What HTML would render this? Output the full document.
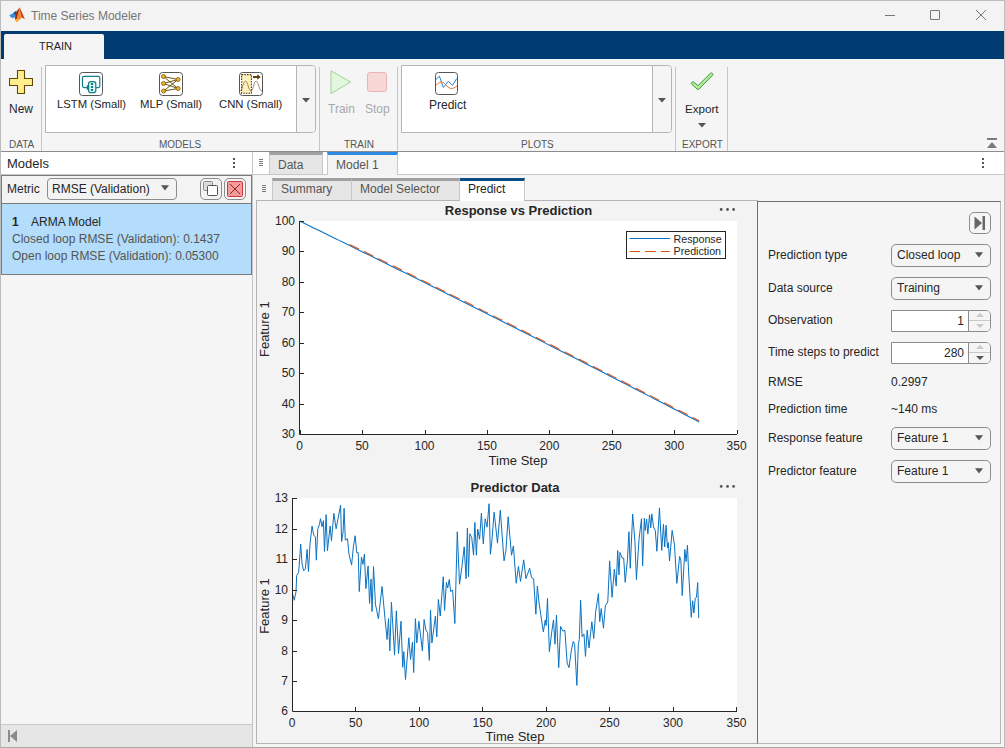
<!DOCTYPE html>
<html><head><meta charset="utf-8">
<style>
*{box-sizing:border-box;margin:0;padding:0}
html,body{width:1005px;height:748px;overflow:hidden;background:#f3f3f3;font-family:"Liberation Sans",sans-serif;color:#262626}
.a{position:absolute}
.t{position:absolute;white-space:nowrap;line-height:1}
</style></head><body>

<!-- title bar -->
<div class="a" style="left:1px;top:1px;width:1003px;height:30px;background:#f3f3f3"></div>
<div class="t" style="left:31px;top:10px;font-size:12px;color:#767676">Time Series Modeler</div>
<div class="a" style="left:885px;top:15px;width:10px;height:1px;background:#767676"></div>
<div class="a" style="left:930px;top:10px;width:10px;height:10px;border:1px solid #767676;border-radius:1px"></div>
<svg class="a" style="left:975px;top:9px" width="12" height="12" viewBox="0 0 12 12"><path d="M1 1L11 11M11 1L1 11" stroke="#767676" stroke-width="1"/></svg>

<!-- toolstrip tab bar -->
<div class="a" style="left:1px;top:31px;width:1003px;height:28px;background:#003c71"></div>
<div class="a" style="left:4px;top:34px;width:100px;height:25px;background:#f5f5f5;border-radius:2px 2px 0 0"></div>
<div class="t" style="left:39px;top:41px;font-size:11px;color:#262626">TRAIN</div>

<!-- toolstrip body -->
<div class="a" style="left:1px;top:59px;width:1003px;height:92px;background:#f5f5f5"></div>
<div class="a" style="left:1px;top:151px;width:1003px;height:1px;background:#8c8c8c"></div>

<!-- DATA section -->
<svg class="a" style="left:9px;top:70px" width="24" height="24" viewBox="0 0 24 24"><path d="M8.5 0.5h7v8h8v7h-8v8h-7v-8h-8v-7h8z" fill="#ffee8e" stroke="#614600" stroke-width="1.1" stroke-linejoin="round"/></svg>
<div class="t" style="left:9px;top:103px;font-size:12px;color:#262626">New</div>
<div class="t" style="left:9px;top:140px;font-size:10px;color:#555">DATA</div>
<div class="a" style="left:41px;top:67px;width:1px;height:84px;background:#c6c6c6"></div>

<!-- MODELS gallery -->
<div class="a" style="left:45px;top:65px;width:271px;height:68px;background:#fff;border:1px solid #b4b4b4;border-radius:0 4px 4px 0"></div>
<div class="a" style="left:296px;top:66px;width:19px;height:66px;background:#f5f5f5;border-left:1px solid #b4b4b4;border-radius:0 3px 3px 0"></div>
<svg class="a" style="left:302px;top:98px" width="8" height="4.5" viewBox="0 0 8 4.5"><path d="M0 0h8L4 4.5z" fill="#555"/></svg>
<!-- LSTM icon -->
<svg class="a" style="left:79px;top:72px" width="24" height="24" viewBox="0 0 24 24">
<rect x="0.5" y="0.5" width="23" height="23" rx="3" fill="#fff" stroke="#555" stroke-width="1"/>
<path d="M16.5 15.6H19.3a1.5 1.5 0 0 0 1.5-1.5V5.8a1.5 1.5 0 0 0-1.5-1.5H5a1.5 1.5 0 0 0-1.5 1.5V14.1a1.5 1.5 0 0 0 1.5 1.5H8" stroke="#117f87" stroke-width="1.2" fill="none"/>
<path d="M7.8 12.6L11.2 15.6 7.8 18.6z" fill="#117f87"/>
<rect x="9.6" y="9.6" width="7.2" height="11" rx="2.2" fill="#dff6f6" stroke="#117f87" stroke-width="1.2"/>
<rect x="11.9" y="11" width="2.2" height="2" fill="#117f87"/><rect x="11.9" y="14" width="2.2" height="2" fill="#117f87"/><rect x="11.9" y="17" width="2.2" height="2" fill="#117f87"/>
</svg>
<div class="t" style="left:57px;top:99px;font-size:11.3px;color:#262626">LSTM (Small)</div>
<!-- MLP icon -->
<svg class="a" style="left:159px;top:72px" width="24" height="24" viewBox="0 0 24 24">
<rect x="0.5" y="0.5" width="23" height="23" rx="3" fill="#fff" stroke="#555" stroke-width="1"/>
<path d="M4.5 4.5L19 7.5M4.5 4.5L19 16.5M4.5 11.5L19 7.5M4.5 11.5L19 16.5M4.5 19L19 7.5M4.5 19L19 16.5" stroke="#5c4200" stroke-width="0.9" fill="none"/>
<circle cx="4.5" cy="4.5" r="2" fill="#f2b526" stroke="#7a5800" stroke-width="0.8"/>
<circle cx="4.5" cy="11.5" r="2" fill="#f2b526" stroke="#7a5800" stroke-width="0.8"/>
<circle cx="4.5" cy="19" r="2" fill="#f2b526" stroke="#7a5800" stroke-width="0.8"/>
<circle cx="19" cy="7.5" r="2" fill="#f2b526" stroke="#7a5800" stroke-width="0.8"/>
<circle cx="19" cy="16.5" r="2" fill="#f2b526" stroke="#7a5800" stroke-width="0.8"/>
</svg>
<div class="t" style="left:140px;top:99px;font-size:11.3px;color:#262626">MLP (Small)</div>
<!-- CNN icon -->
<svg class="a" style="left:239px;top:72px" width="24" height="24" viewBox="0 0 24 24">
<rect x="0.5" y="0.5" width="23" height="23" rx="3" fill="#fff" stroke="#555" stroke-width="1"/>
<rect x="2.6" y="2.6" width="9.8" height="18.6" fill="#fdf1bd" stroke="#5a3c00" stroke-width="1.1" stroke-dasharray="1.6 1.1"/>
<path d="M1 19C3.5 19 4 9.2 6.5 9.2S9.5 19 12 19 14.5 9.2 17 9.2 20 19 23 19" fill="none" stroke="#8a7048" stroke-width="0.8"/>
<path d="M14 5h5.2" stroke="#5a3c00" stroke-width="1.9"/><path d="M18.3 2.2l3.4 2.8-3.4 2.8z" fill="#5a3c00"/>
</svg>
<div class="t" style="left:219px;top:99px;font-size:11.3px;color:#262626">CNN (Small)</div>
<div class="t" style="left:159px;top:140px;font-size:10px;color:#555">MODELS</div>
<div class="a" style="left:319px;top:67px;width:1px;height:84px;background:#c6c6c6"></div>

<!-- TRAIN section -->
<svg class="a" style="left:330px;top:70px" width="22" height="25" viewBox="0 0 22 25"><path d="M1 0.8L20.5 12 1 23.5z" fill="#e3f7de" stroke="#9ed394" stroke-width="1" stroke-linejoin="round"/></svg>
<div class="a" style="left:367px;top:72px;width:20px;height:20px;background:#f8d7d7;border:1px solid #e8b4b4;border-radius:3px"></div>
<div class="t" style="left:328px;top:103px;font-size:12px;color:#a8a8a8">Train</div>
<div class="t" style="left:365px;top:103px;font-size:12px;color:#a8a8a8">Stop</div>
<div class="t" style="left:344px;top:140px;font-size:10px;color:#555">TRAIN</div>
<div class="a" style="left:397px;top:67px;width:1px;height:84px;background:#c6c6c6"></div>

<!-- PLOTS gallery -->
<div class="a" style="left:401px;top:65px;width:271px;height:68px;background:#fff;border:1px solid #b4b4b4;border-radius:0 4px 4px 0"></div>
<div class="a" style="left:652px;top:66px;width:19px;height:66px;background:#f5f5f5;border-left:1px solid #b4b4b4;border-radius:0 3px 3px 0"></div>
<svg class="a" style="left:658px;top:98px" width="8" height="4.5" viewBox="0 0 8 4.5"><path d="M0 0h8L4 4.5z" fill="#555"/></svg>
<svg class="a" style="left:435px;top:72px" width="23" height="23" viewBox="0 0 23 23">
<rect x="0.5" y="0.5" width="22" height="22" rx="3" fill="#fff" stroke="#555" stroke-width="1"/>
<path d="M1 7.4L4.4 4.2 8.4 15.5 13.4 9.2 17.5 13.4 21.8 6.4" fill="none" stroke="#2a86d2" stroke-width="1"/>
<path d="M1 13.3C3.5 10.5 5.5 9.8 7.5 10.2C10 10.8 12 15.5 15.5 16.4C18 16.9 20 15.5 22 14" fill="none" stroke="#e66f36" stroke-width="1"/>
</svg>
<div class="t" style="left:429px;top:99px;font-size:12px;color:#262626">Predict</div>
<div class="t" style="left:521px;top:140px;font-size:10px;color:#555">PLOTS</div>
<div class="a" style="left:675px;top:67px;width:1px;height:84px;background:#c6c6c6"></div>

<!-- EXPORT -->
<svg class="a" style="left:690px;top:72px" width="24" height="19" viewBox="0 0 24 19"><path d="M1.8 10.3a1.4 1.4 0 0 1 2-0.1L8 13.6 20.4 1.4a1.4 1.4 0 0 1 2 2L9 17a1.4 1.4 0 0 1-2 0L1.9 12.3a1.4 1.4 0 0 1-0.1-2z" fill="#b2ec9c" stroke="#3d9e3a" stroke-width="1"/></svg>
<div class="t" style="left:685px;top:103px;font-size:11.6px;color:#262626">Export</div>
<svg class="a" style="left:698px;top:123px" width="8" height="4.5" viewBox="0 0 8 4.5"><path d="M0 0h8L4 4.5z" fill="#555"/></svg>
<div class="t" style="left:682px;top:140px;font-size:10px;color:#555">EXPORT</div>
<div class="a" style="left:727px;top:67px;width:1px;height:84px;background:#c6c6c6"></div>
<!-- collapse toolstrip -->
<div class="a" style="left:987px;top:138px;width:10px;height:2px;background:#7a7a7a"></div>
<svg class="a" style="left:987px;top:142px" width="10" height="6" viewBox="0 0 10 6"><path d="M0 6L5 0 10 6z" fill="#7a7a7a"/></svg>


<!-- MATLAB logo -->
<svg class="a" style="left:0;top:0" width="30" height="26" viewBox="0 0 30 26">
<path d="M9.3 15.2L13 13.3 15.5 11.2 17 12.5 15.5 16.5 13.5 18.3 11 17.6z" fill="#3d8fd8"/>
<path d="M13.5 13L16.2 10.8 17.5 12.8 15.2 15.8z" fill="#1f4f9a"/>
<path d="M19.6 7.6L21.5 11.5 24.8 19.2 22 17.5 16.6 22.2 14.8 19.5 15.5 14.5 17.5 10.5z" fill="#ee8a34"/>
<path d="M19.6 7.6L21.5 11.5 24.8 19.2 21.6 17z" fill="#c8401e"/>
<path d="M17.5 10.5L19.6 7.6 18 13 16.5 19 15 19.5 15.5 14.5z" fill="#9a2616"/>
<path d="M15 19.5L16.6 22.2 19 19.5 16.5 19z" fill="#f7b32b"/>
</svg>

<!-- MODELS PANEL -->
<div class="a" style="left:1px;top:152px;width:251px;height:22px;background:#fff"></div>
<div class="t" style="left:7px;top:157px;font-size:13px;color:#262626">Models</div>
<div class="a" style="left:233px;top:158px;width:2px;height:2px;background:#555"></div>
<div class="a" style="left:233px;top:162px;width:2px;height:2px;background:#555"></div>
<div class="a" style="left:233px;top:166px;width:2px;height:2px;background:#555"></div>
<div class="a" style="left:1px;top:174px;width:251px;height:1px;background:#c8c8c8"></div>
<!-- metric row -->
<div class="a" style="left:1px;top:175px;width:251px;height:100px;background:#b3ddfb;border:1px solid #7a7a7a"></div>
<div class="a" style="left:2px;top:176px;width:249px;height:28px;background:#f3f3f3;border-bottom:1px solid #7a7a7a"></div>
<div class="t" style="left:7px;top:183px;font-size:12px;color:#262626">Metric</div>
<div class="a" style="left:47px;top:178px;width:130px;height:22px;background:#f3f3f3;border:1px solid #8c8c8c;border-radius:4px"></div>
<div class="t" style="left:52px;top:183px;font-size:12px;color:#262626">RMSE (Validation)</div>
<svg class="a" style="left:161px;top:185px" width="8" height="6" viewBox="0 0 8 6"><path d="M0 0.3h8L4 5.6z" fill="#555"/></svg>
<div class="a" style="left:200px;top:178px;width:22px;height:22px;border:1px solid #8c8c8c;border-radius:5px"></div>
<svg class="a" style="left:203px;top:181px" width="16" height="16" viewBox="0 0 16 16"><rect x="0.5" y="0.5" width="9" height="9" rx="1" fill="#dcdcdc" stroke="#8c8c8c"/><rect x="4.5" y="4.5" width="10" height="10" rx="1" fill="#fff" stroke="#555"/></svg>
<div class="a" style="left:224px;top:178px;width:22px;height:22px;border:1px solid #8c8c8c;border-radius:5px"></div>
<svg class="a" style="left:227px;top:181px" width="16" height="16" viewBox="0 0 16 16"><rect x="0.5" y="0.5" width="15" height="15" rx="1" fill="#f59a9a" stroke="#c43c3c"/><path d="M3 3L13 13M13 3L3 13" stroke="#7a1a1a" stroke-width="0.9"/></svg>
<!-- selected model -->
<div class="t" style="left:12px;top:216px;font-size:12px;font-weight:bold;color:#262626">1</div>
<div class="t" style="left:31px;top:216px;font-size:12px;color:#262626">ARMA Model</div>
<div class="t" style="left:12px;top:233px;font-size:12px;color:#555">Closed loop RMSE (Validation): 0.1437</div>
<div class="t" style="left:12px;top:250px;font-size:12px;color:#555">Open loop RMSE (Validation): 0.05300</div>
<!-- list bg -->
<div class="a" style="left:1px;top:275px;width:251px;height:449px;background:#f5f5f5"></div>
<div class="a" style="left:1px;top:724px;width:251px;height:23px;background:#e6e6e6;border-top:1px solid #c8c8c8"></div>
<div class="a" style="left:8px;top:730px;width:2px;height:12px;background:#8c8c8c"></div>
<svg class="a" style="left:10px;top:730px" width="7" height="12" viewBox="0 0 7 12"><path d="M7 0v12L0 6z" fill="#8c8c8c"/></svg>
<div class="a" style="left:252px;top:152px;width:1px;height:596px;background:#c4c4c4"></div>

<!-- DOCUMENT TABS row 1 -->
<div class="a" style="left:253px;top:152px;width:751px;height:22px;background:#fff"></div>
<div class="a" style="left:253px;top:174px;width:751px;height:1px;background:#c8c8c8"></div>
<svg class="a" style="left:259px;top:158px" width="5" height="9" viewBox="0 0 5 9"><path d="M0 1.5h4M0 3.5h4M0 5.5h4M0 7.5h4" stroke="#7a7a7a" stroke-width="1"/></svg>
<div class="a" style="left:269px;top:152px;width:54px;height:22px;background:#e6e6e6;border-top:3px solid #a0a0a0;border-right:1px solid #c8c8c8;border-left:1px solid #c8c8c8"></div>
<div class="t" style="left:278px;top:159px;font-size:12px;color:#555">Data</div>
<div class="a" style="left:327px;top:152px;width:71px;height:23px;background:#f3f3f3;border-top:3px solid #2c8ae2;border-left:1px solid #c8c8c8;border-right:1px solid #c8c8c8"></div>
<div class="t" style="left:336px;top:159px;font-size:12px;color:#555">Model 1</div>
<div class="a" style="left:982px;top:158px;width:2px;height:2px;background:#555"></div>
<div class="a" style="left:982px;top:162px;width:2px;height:2px;background:#555"></div>
<div class="a" style="left:982px;top:166px;width:2px;height:2px;background:#555"></div>


<!-- FIGURE AREA -->
<div class="a" style="left:253px;top:175px;width:751px;height:573px;background:#f5f5f5"></div>
<div class="a" style="left:256px;top:200px;width:502px;height:544px;background:#f3f3f3;border-left:1px solid #b4b4b4;border-top:1px solid #b4b4b4;border-bottom:1px solid #b4b4b4"></div>
<!-- subtabs row -->
<svg class="a" style="left:262px;top:184px" width="5" height="9" viewBox="0 0 5 9"><path d="M0 1.5h4M0 3.5h4M0 5.5h4M0 7.5h4" stroke="#7a7a7a" stroke-width="1"/></svg>
<div class="a" style="left:272px;top:178px;width:80px;height:22px;background:#e6e6e6;border-top:3px solid #a0a0a0;border-left:1px solid #c8c8c8;border-right:1px solid #c8c8c8"></div>
<div class="t" style="left:281px;top:183px;font-size:12px;color:#555">Summary</div>
<div class="a" style="left:352px;top:178px;width:108px;height:22px;background:#e6e6e6;border-top:3px solid #a0a0a0;border-right:1px solid #c8c8c8"></div>
<div class="t" style="left:360px;top:183px;font-size:12px;color:#555">Model Selector</div>
<div class="a" style="left:460px;top:178px;width:65px;height:23px;background:#fff;border-top:3px solid #0b4b86;border-right:1px solid #c8c8c8"></div>
<div class="t" style="left:468px;top:183px;font-size:12px;color:#262626">Predict</div>

<svg class="a" style="left:0;top:0" width="1005" height="748" viewBox="0 0 1005 748" font-family="'Liberation Sans', sans-serif" font-size="12" fill="#262626">
<rect x="300" y="221" width="437" height="213" fill="#fff"/>
<polyline points="299.7,221.1 304.69,223.53 309.69,225.97 314.68,228.4 319.67,230.84 324.67,233.29 329.66,235.73 334.65,238.17 339.65,240.62 344.64,243.07 349.63,245.52 354.62,247.98 359.62,250.43 364.61,252.89 369.6,255.35 374.6,257.81 379.59,260.27 384.58,262.74 389.58,265.2 394.57,267.67 399.56,270.14 404.56,272.61 409.55,275.09 414.54,277.56 419.54,280.04 424.53,282.52 429.52,285 434.51,287.49 439.51,289.97 444.5,292.46 449.49,294.95 454.49,297.44 459.48,299.94 464.47,302.43 469.47,304.93 474.46,307.43 479.45,309.93 484.45,312.43 489.44,314.94 494.43,317.45 499.43,319.95 504.42,322.47 509.41,324.98 514.41,327.49 519.4,330.01 524.39,332.53 529.38,335.05 534.38,337.57 539.37,340.1 544.36,342.62 549.36,345.15 554.35,347.68 559.34,350.21 564.34,352.75 569.33,355.28 574.32,357.82 579.32,360.36 584.31,362.9 589.3,365.45 594.3,367.99 599.29,370.54 604.28,373.09 609.27,375.64 614.27,378.19 619.26,380.75 624.25,383.31 629.25,385.86 634.24,388.43 639.23,390.99 644.23,393.55 649.22,396.12 654.21,398.69 659.21,401.26 664.2,403.83 669.19,406.41 674.19,408.98 679.18,411.56 684.17,414.14 689.17,416.72 694.16,419.31 699.15,421.89" fill="none" stroke="#0a72c2" stroke-width="1.1"/>
<polyline points="349.63,244.46 354.62,246.91 359.62,249.36 364.61,251.82 369.6,254.28 374.6,256.74 379.59,259.2 384.58,261.67 389.58,264.13 394.57,266.6 399.56,269.07 404.56,271.55 409.55,274.02 414.54,276.5 419.54,278.97 424.53,281.45 429.52,283.94 434.51,286.42 439.51,288.91 444.5,291.39 449.49,293.88 454.49,296.38 459.48,298.87 464.47,301.36 469.47,303.86 474.46,306.36 479.45,308.86 484.45,311.37 489.44,313.87 494.43,316.38 499.43,318.89 504.42,321.4 509.41,323.91 514.41,326.43 519.4,328.94 524.39,331.46 529.38,333.98 534.38,336.5 539.37,339.03 544.36,341.56 549.36,344.08 554.35,346.61 559.34,349.15 564.34,351.68 569.33,354.22 574.32,356.75 579.32,359.29 584.31,361.84 589.3,364.38 594.3,366.92 599.29,369.47 604.28,372.02 609.27,374.57 614.27,377.13 619.26,379.68 624.25,382.24 629.25,384.8 634.24,387.36 639.23,389.92 644.23,392.49 649.22,395.05 654.21,397.62 659.21,400.19 664.2,402.77 669.19,405.34 674.19,407.92 679.18,410.5 684.17,413.08 689.17,415.66 694.16,418.24 699.15,420.83" fill="none" stroke="#d95319" stroke-width="1.1" stroke-dasharray="10.5 5.5"/>
<path d="M299.5 221V434.5H737" fill="none" stroke="#262626" stroke-width="1"/>
<path d="M300.5 434V430 M362.5 434V430 M425.5 434V430 M487.5 434V430 M549.5 434V430 M612.5 434V430 M674.5 434V430 M737.5 434V430 M300 434.5H304 M300 404.5H304 M300 373.5H304 M300 343.5H304 M300 312.5H304 M300 282.5H304 M300 251.5H304 M300 221.5H304" stroke="#262626" stroke-width="1"/>
<text x="299.7" y="450" text-anchor="middle">0</text>
<text x="362.11" y="450" text-anchor="middle">50</text>
<text x="424.53" y="450" text-anchor="middle">100</text>
<text x="486.94" y="450" text-anchor="middle">150</text>
<text x="549.36" y="450" text-anchor="middle">200</text>
<text x="611.77" y="450" text-anchor="middle">250</text>
<text x="674.19" y="450" text-anchor="middle">300</text>
<text x="736.6" y="450" text-anchor="middle">350</text>
<text x="295" y="438.4" text-anchor="end">30</text>
<text x="295" y="407.91" text-anchor="end">40</text>
<text x="295" y="377.43" text-anchor="end">50</text>
<text x="295" y="346.94" text-anchor="end">60</text>
<text x="295" y="316.46" text-anchor="end">70</text>
<text x="295" y="285.97" text-anchor="end">80</text>
<text x="295" y="255.49" text-anchor="end">90</text>
<text x="295" y="225" text-anchor="end">100</text>
<text x="518" y="464.5" text-anchor="middle" font-size="13">Time Step</text>
<text transform="translate(269,329.2) rotate(-90)" text-anchor="middle" font-size="13">Feature 1</text>
<text x="518.5" y="215" text-anchor="middle" font-size="13" font-weight="bold">Response vs Prediction</text>
<rect x="626.5" y="231.5" width="99" height="27" fill="#fff" stroke="#262626" stroke-width="1"/>
<path d="M629.5 238.5H670" stroke="#0a72c2" stroke-width="1.1"/>
<path d="M629.5 251.5H640M645 251.5H655.8M660.8 251.5H669.8" stroke="#d95319" stroke-width="1.1"/>
<text x="673.5" y="243" font-size="10.7">Response</text>
<text x="673.5" y="255" font-size="10.7">Prediction</text>
<circle cx="721.2" cy="209.5" r="1.4" fill="#555"/>
<circle cx="727.5" cy="209.5" r="1.4" fill="#555"/>
<circle cx="733.6" cy="209.5" r="1.4" fill="#555"/>
<rect x="293" y="498" width="444" height="213" fill="#fff"/>
<polyline points="292.67,594.22 294.28,600.24 296.02,591.55 296.68,575.51 298.69,572.17 300.7,544.09 302.03,563.48 303.64,570.83 305.37,568.82 307.11,549.44 308.45,571.5 310.05,543.42 312.06,526.04 313.8,535.4 315.4,536.74 316.34,560.13 317.81,528.72 319.41,524.71 320.48,518.69 322.09,526.71 323.42,520.7 324.49,551.44 326.1,514.68 327.43,550.78 330.11,526.04 331.44,540.75 333.85,513.34 336.12,528.72 340.59,505.15 341.62,541.62 343.09,532.06 344.12,508.38 345.29,540.15 347.5,538.68 348.97,554.12 351.62,565.15 353.38,546.76 355.15,535.74 356.76,552.65 358.24,552.65 359.26,591.62 361.47,557.06 362.94,564.41 364.41,554.12 365.88,588.68 368.09,565.88 369.56,603.38 371.03,579.12 372.06,611.47 373.53,566.62 375.44,604.12 378.38,618.82 382.06,586.47 385,618.82 387.09,639.52 388.48,618.66 389.87,650.81 391.43,602.15 394.56,655.16 396.3,610.84 398.56,653.42 400.99,621.27 402.73,667.32 403.77,651.68 405.51,679.49 408.81,637.78 410.55,659.5 412.46,642.12 413.68,672.54 415.41,618.66 416.8,642.99 418.89,621.27 422.37,650.81 424.1,619.53 425.84,629.96 427.58,632.57 429.32,660.37 430.53,609.97 431.92,642.99 435.4,616.05 436.79,636.91 438.35,599.54 440.25,616.04 443.24,576.74 444.55,610.42 446.42,582.35 447.73,587.97 449.23,579.54 450.73,591.71 452.6,589.84 454.84,623.53 457.28,531.82 459.52,584.22 461.96,566.44 464.2,546.79 466.07,578.61 467.38,528.07 468.51,576.74 469.82,533.69 471.69,537.43 473.56,555.21 474.87,522.46 476.37,555.21 477.68,529.01 479.55,539.3 481.42,513.1 483.29,543.98 485.16,518.72 487.04,527.14 489.09,503.74 490.41,554.28 491.87,541.18 494.12,512.17 497.49,543.05 500.29,510.29 504.04,560.83 505.91,550.53 508.15,516.84 511.52,555.21 513.4,545.85 516.2,583.29 518.45,566.44 520.51,581.41 523.69,559.89 525.93,578.61 529.68,568.31 531.55,577.67 533.61,578.61 535.85,614.17 537.35,586.09 539.04,602.94 543.37,632.06 545.24,619.89 546.18,625.51 547.49,598.37 549.36,651.71 551.6,632.99 553.48,619.89 554.97,644.22 556.47,615.21 558.72,667.62 560.59,626.44 562.83,631.12 564.89,630.19 567.14,662.94 569.01,667.62 571.44,649.84 573.31,641.41 574.62,644.22 576.87,685.4 578.37,644.22 579.3,639.54 580.61,600.24 582.11,636.74 583.98,633.93 585.48,656.39 587.16,630.19 589.04,647.97 591.84,621.76 593.74,638.5 595.61,612.3 598.42,593.58 599.73,621.65 601.23,608.55 603.48,628.21 605.35,605.75 607.78,602 609.65,560.83 612.08,597.32 614.33,569.25 616.2,586.09 617.7,550.53 619.01,574.86 619.95,552.41 622.19,558.02 623.69,558.02 625.19,582.35 627.43,559.89 628.93,531.82 630.24,568.31 632.67,514.04 634.92,541.18 636.42,579.54 639.04,539.3 641.47,518.72 642.61,566.04 644.34,518.25 645.21,530.41 646.6,519.12 647.82,533.89 649.56,514.77 650.78,527.81 651.82,513.9 653.56,526.94 655.29,530.41 656.86,551.27 659.46,507.82 661.72,550.4 663.46,524.33 664.68,546.92 666.07,525.2 667.46,547.79 668.33,542.58 669.54,560.83 672.15,530.41 674.41,544.32 676.84,583.42 679.62,556.48 680.84,559.96 682.23,595.59 684.84,549.53 686.05,561.7 687.45,545.19 688.66,572.99 691.27,617.31 692.66,600.8 693.88,612.96 695.27,598.19 696.48,597.32 697.7,582.55 698.74,618.18" fill="none" stroke="#0a72c2" stroke-width="1" stroke-linejoin="round"/>
<path d="M292.5 498V711.5H737" fill="none" stroke="#262626" stroke-width="1"/>
<path d="M292.5 711V707 M355.5 711V707 M419.5 711V707 M482.5 711V707 M546.5 711V707 M609.5 711V707 M673.5 711V707 M736.5 711V707 M293 711.5H297 M293 681.5H297 M293 651.5H297 M293 620.5H297 M293 590.5H297 M293 559.5H297 M293 529.5H297 M293 498.5H297" stroke="#262626" stroke-width="1"/>
<text x="292.2" y="727" text-anchor="middle">0</text>
<text x="355.67" y="727" text-anchor="middle">50</text>
<text x="419.14" y="727" text-anchor="middle">100</text>
<text x="482.61" y="727" text-anchor="middle">150</text>
<text x="546.08" y="727" text-anchor="middle">200</text>
<text x="609.55" y="727" text-anchor="middle">250</text>
<text x="673.02" y="727" text-anchor="middle">300</text>
<text x="736.49" y="727" text-anchor="middle">350</text>
<text x="288" y="715.4" text-anchor="end">6</text>
<text x="288" y="684.96" text-anchor="end">7</text>
<text x="288" y="654.51" text-anchor="end">8</text>
<text x="288" y="624.07" text-anchor="end">9</text>
<text x="288" y="593.63" text-anchor="end">10</text>
<text x="288" y="563.19" text-anchor="end">11</text>
<text x="288" y="532.74" text-anchor="end">12</text>
<text x="288" y="502.3" text-anchor="end">13</text>
<text x="515" y="741" text-anchor="middle" font-size="13">Time Step</text>
<text transform="translate(269,606) rotate(-90)" text-anchor="middle" font-size="13">Feature 1</text>
<text x="515" y="492" text-anchor="middle" font-size="13" font-weight="bold">Predictor Data</text>
<circle cx="721.2" cy="486.4" r="1.4" fill="#555"/>
<circle cx="727.5" cy="486.4" r="1.4" fill="#555"/>
<circle cx="733.6" cy="486.4" r="1.4" fill="#555"/>
</svg>
<!-- PROPERTIES PANEL -->
<div class="a" style="left:757px;top:201px;width:244px;height:543px;background:#f5f5f5;border-left:1px solid #6e6e6e;border-top:1px solid #6e6e6e;border-right:1px solid #b8b8b8;border-bottom:1px solid #b8b8b8"></div>
<div class="a" style="left:969px;top:212px;width:22px;height:22px;border:1px solid #8c8c8c;border-radius:5px;background:#f5f5f5"></div>
<svg class="a" style="left:974px;top:215px" width="12" height="16" viewBox="0 0 12 16"><path d="M0.5 1.5L8 8 0.5 14.5z" fill="#666"/><rect x="8.5" y="1" width="2.5" height="14" fill="#666"/></svg>

<div class="t" style="left:768px;top:249px;font-size:12px">Prediction type</div>
<div class="a" style="left:891px;top:244px;width:100px;height:23px;border:1px solid #8c8c8c;border-radius:5px;background:#f5f5f5"></div>
<div class="t" style="left:897px;top:249px;font-size:12px">Closed loop</div>
<svg class="a" style="left:975px;top:252px" width="8" height="6" viewBox="0 0 8 6"><path d="M0 0.3h8L4 5.6z" fill="#555"/></svg>

<div class="t" style="left:768px;top:282px;font-size:12px">Data source</div>
<div class="a" style="left:891px;top:277px;width:100px;height:23px;border:1px solid #8c8c8c;border-radius:5px;background:#f5f5f5"></div>
<div class="t" style="left:897px;top:282px;font-size:12px">Training</div>
<svg class="a" style="left:975px;top:285px" width="8" height="6" viewBox="0 0 8 6"><path d="M0 0.3h8L4 5.6z" fill="#555"/></svg>

<div class="t" style="left:768px;top:314px;font-size:12px">Observation</div>
<div class="a" style="left:891px;top:310px;width:100px;height:22px;border:1px solid #8c8c8c;border-radius:0 5px 5px 0;background:#fff"></div>
<div class="a" style="left:968px;top:311px;width:22px;height:20px;background:#f5f5f5;border-left:1px solid #8c8c8c;border-radius:0 4px 4px 0"></div>
<div class="a" style="left:969px;top:320px;width:21px;height:1px;background:#c8c8c8"></div>
<svg class="a" style="left:976px;top:313px" width="8" height="4" viewBox="0 0 8 4"><path d="M0 4h8L4 0z" fill="#c8c8c8"/></svg>
<svg class="a" style="left:976px;top:324px" width="8" height="4" viewBox="0 0 8 4"><path d="M0 0h8L4 4z" fill="#c8c8c8"/></svg>
<div class="t" style="left:940px;top:315px;width:24px;text-align:right;font-size:12px">1</div>

<div class="t" style="left:768px;top:346px;font-size:12px">Time steps to predict</div>
<div class="a" style="left:891px;top:342px;width:100px;height:22px;border:1px solid #8c8c8c;border-radius:0 5px 5px 0;background:#fff"></div>
<div class="a" style="left:968px;top:343px;width:22px;height:20px;background:#f5f5f5;border-left:1px solid #8c8c8c;border-radius:0 4px 4px 0"></div>
<div class="a" style="left:969px;top:352px;width:21px;height:1px;background:#c8c8c8"></div>
<svg class="a" style="left:976px;top:345px" width="8" height="4" viewBox="0 0 8 4"><path d="M0 4h8L4 0z" fill="#c8c8c8"/></svg>
<svg class="a" style="left:976px;top:356px" width="8" height="4" viewBox="0 0 8 4"><path d="M0 0h8L4 4z" fill="#555"/></svg>
<div class="t" style="left:920px;top:347px;width:44px;text-align:right;font-size:12px">280</div>

<div class="t" style="left:768px;top:376px;font-size:12px">RMSE</div>
<div class="t" style="left:891px;top:376px;font-size:12px">0.2997</div>
<div class="t" style="left:768px;top:403px;font-size:12px">Prediction time</div>
<div class="t" style="left:891px;top:403px;font-size:12px">~140 ms</div>

<div class="t" style="left:768px;top:432px;font-size:12px">Response feature</div>
<div class="a" style="left:891px;top:427px;width:100px;height:23px;border:1px solid #8c8c8c;border-radius:5px;background:#f5f5f5"></div>
<div class="t" style="left:897px;top:432px;font-size:12px">Feature 1</div>
<svg class="a" style="left:975px;top:435px" width="8" height="6" viewBox="0 0 8 6"><path d="M0 0.3h8L4 5.6z" fill="#555"/></svg>

<div class="t" style="left:768px;top:465px;font-size:12px">Predictor feature</div>
<div class="a" style="left:891px;top:460px;width:100px;height:23px;border:1px solid #8c8c8c;border-radius:5px;background:#f5f5f5"></div>
<div class="t" style="left:897px;top:465px;font-size:12px">Feature 1</div>
<svg class="a" style="left:975px;top:468px" width="8" height="6" viewBox="0 0 8 6"><path d="M0 0.3h8L4 5.6z" fill="#555"/></svg>

<div class="a" style="left:0;top:0;width:1005px;height:748px;border:1px solid #bcbcbc;border-bottom-color:#a8a8a8"></div>
</body></html>
